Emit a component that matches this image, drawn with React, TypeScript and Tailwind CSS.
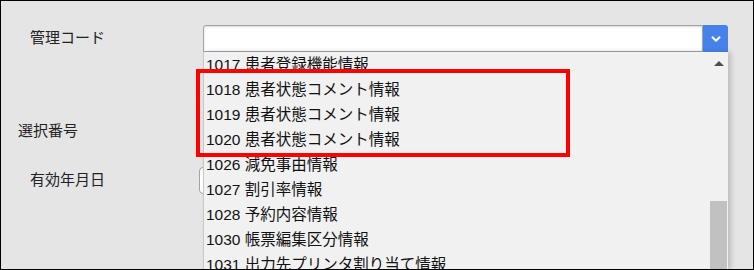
import { ChevronDown } from 'lucide-react'

const items = [
  '1017 患者登録機能情報',
  '1018 患者状態コメント情報',
  '1019 患者状態コメント情報',
  '1020 患者状態コメント情報',
  '1026 減免事由情報',
  '1027 割引率情報',
  '1028 予約内容情報',
  '1030 帳票編集区分情報',
  '1031 出力先プリンタ割り当て情報',
]

export default function App() {
  return (
    <div className="relative h-[270px] w-[754px] overflow-hidden border border-black bg-[#e5e5e5] font-['Liberation_Sans','Noto_Sans_CJK_JP',sans-serif] text-[#222]">
      {/* 管理コード */}
      <div className="mt-[24px] flex h-[27px] items-center">
        <div className="w-[202px] pl-[29px] text-[15px]">管理コード</div>
        <div className="flex h-[27px] w-[525px]">
          <div className="flex-1 rounded-tl-[3px] border border-[#a3a3a3] bg-white shadow-[inset_0_1px_2px_rgba(0,0,0,0.15)]" />
          <div className="flex w-[25px] items-center justify-center rounded-tr-[3px] bg-[#4583ea]">
            <ChevronDown className="h-[14px] w-[14px] text-white" strokeWidth={3.5} />
          </div>
        </div>
      </div>

      {/* 選択番号 */}
      <div className="mt-[69px] pl-[17px] text-[15px] leading-[20px]">選択番号</div>

      {/* 有効年月日 */}
      <div className="mt-[26px] flex h-[27px] items-center">
        <div className="w-[198px] pl-[29px] text-[15px]">有効年月日</div>
        <div className="h-[27px] w-[400px] rounded-[4px] border border-[#a3a3a3] bg-white" />
      </div>

      {/* dropdown list */}
      <div className="absolute bottom-0 left-[202px] top-[51px] w-[525px] border-l border-[#c8c8c8] bg-[#f1f1f1] shadow-[3px_0_5px_rgba(0,0,0,0.18)]">
        <div className="pl-[2px] pt-[-1px] text-[15.5px] text-[#111]">
          {items.map((item) => (
            <div key={item} className="h-[25px] whitespace-nowrap leading-[25px]">
              {item}
            </div>
          ))}
        </div>
        <div className="absolute right-[1px] top-0 flex h-full w-[17px] flex-col items-center">
          <div className="mt-[9px] h-0 w-0 border-x-[5px] border-b-[5px] border-x-transparent border-b-[#4f4f4f]" />
          <div className="mt-[135px] w-full flex-1 bg-[#c1c1c1]" />
        </div>
      </div>

      {/* highlight box */}
      <div className="absolute left-[195px] top-[68px] h-[88px] w-[374px] border-[4px] border-[#ff0000]" />
    </div>
  )
}
